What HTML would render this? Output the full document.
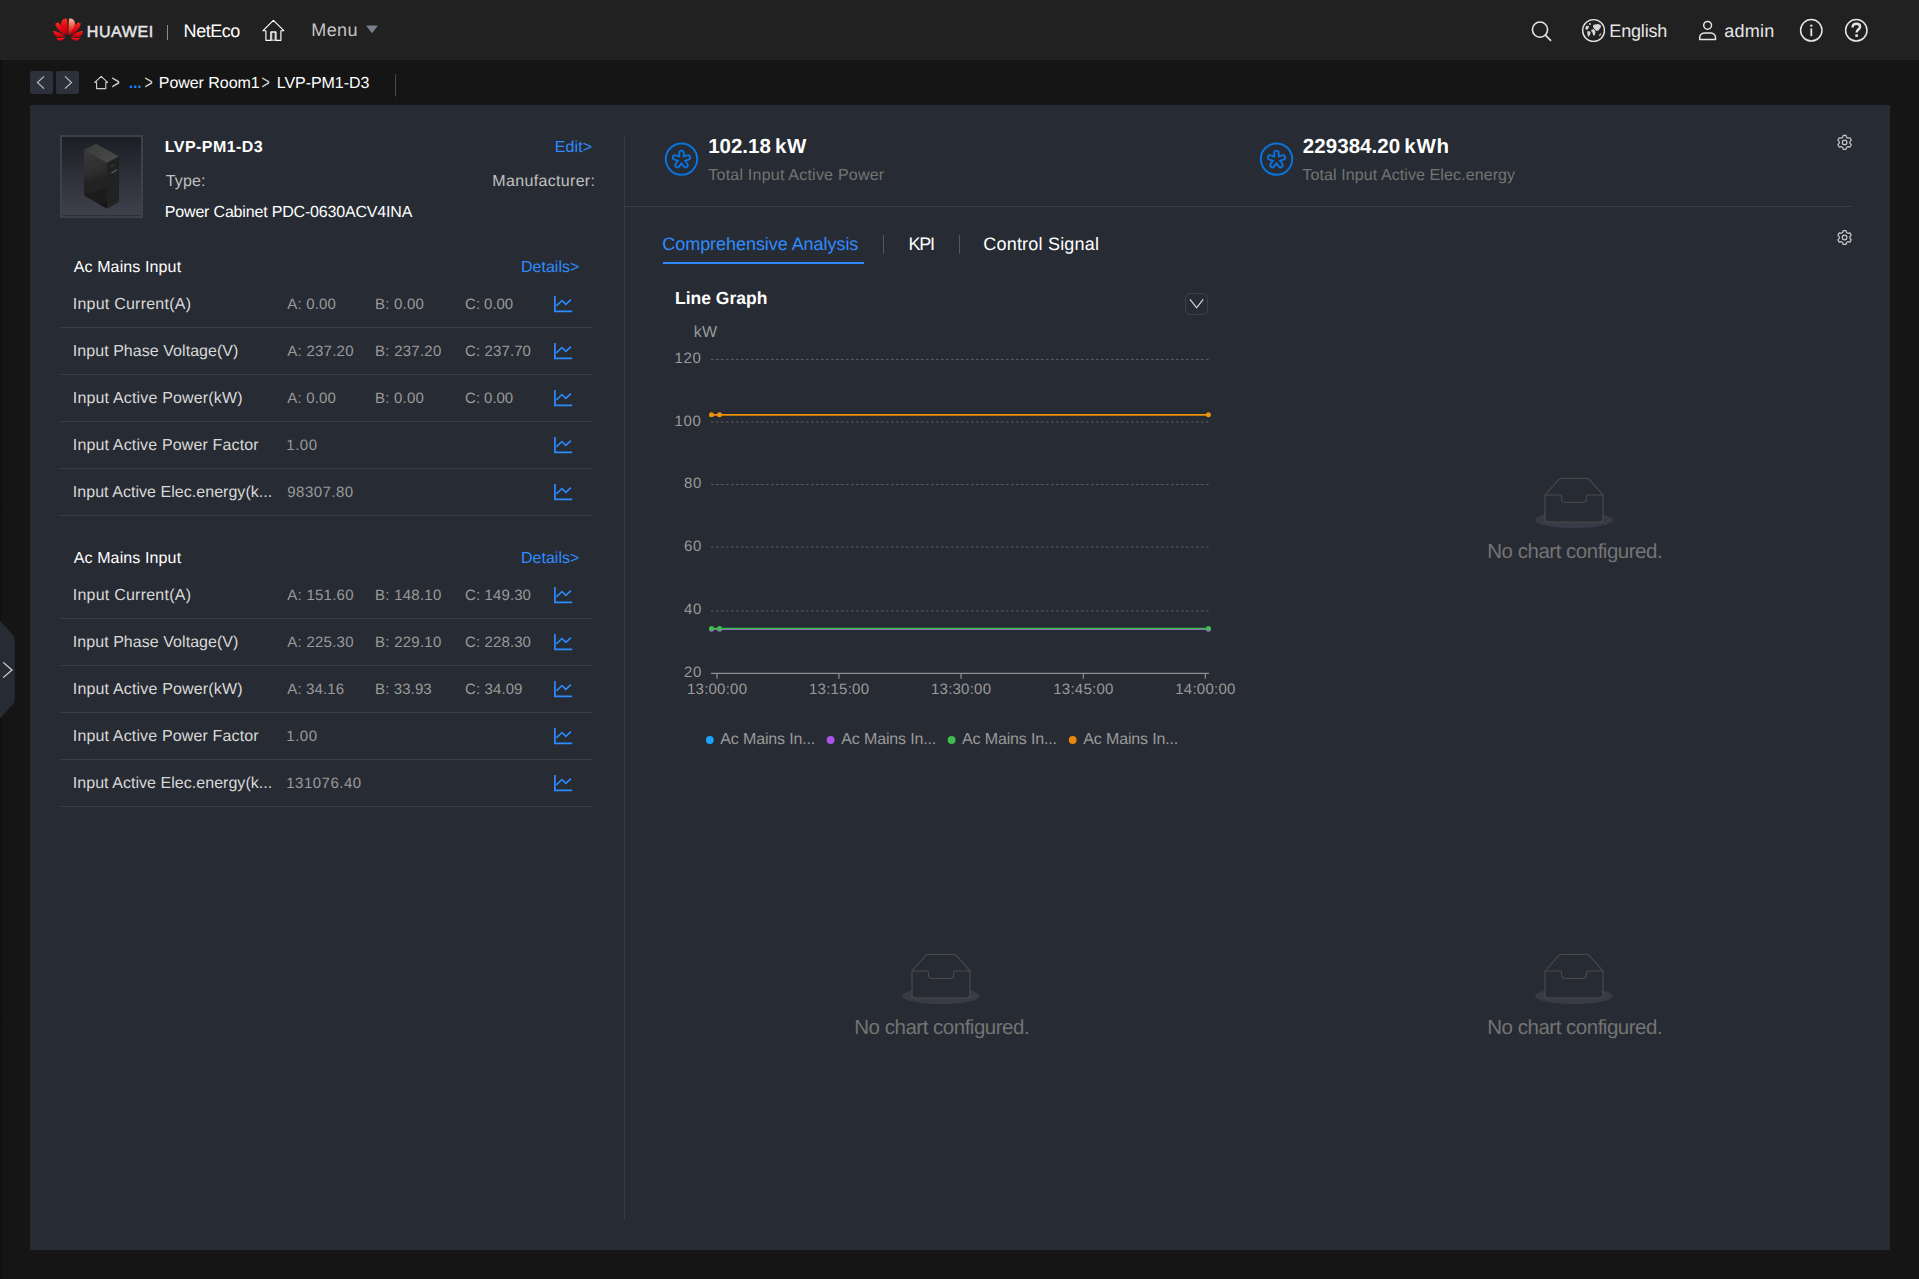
<!DOCTYPE html>
<html lang="en"><head><meta charset="utf-8"><title>NetEco - LVP-PM1-D3</title>
<style>
html,body{margin:0;padding:0}
html{background:#151515}
body{width:1919px;height:1279px;position:relative;overflow:hidden;background:#151515;font-family:"Liberation Sans",sans-serif;-webkit-font-smoothing:antialiased;text-rendering:geometricPrecision}
.abs{position:absolute;display:block}
.t{position:absolute;display:block;line-height:20px;height:20px;white-space:pre}
header{position:absolute;left:0;top:0;width:1919px;height:59px;background:#212121;border-bottom:1px solid #242424}
nav{position:absolute;left:0;top:0;width:0;height:0}
aside{position:absolute;left:0;top:0;width:0;height:0}
body::before{content:'';position:absolute;left:0;top:60px;width:3px;height:1219px;background:linear-gradient(90deg,#0e0e0e,#151515)}
main{position:absolute;left:0;top:0;width:0;height:0}
.panel{position:absolute;left:30px;top:105px;width:1860px;height:1145px;background:#272b33}
.sep{position:absolute;left:60px;width:533px;height:1px;background:#3c3e44}
.vline{position:absolute;left:624px;top:135px;width:1px;height:1085px;background:#383b42}
.hline{position:absolute;left:625px;top:206px;width:1227px;height:1px;background:#3f3f42}
.tabline{position:absolute;left:663px;top:262px;width:201px;height:2px;background:#2e8bff}
.tsep{position:absolute;top:235px;width:1px;height:19px;background:#55575c}
.dd{position:absolute;left:1185px;top:293px;width:21px;height:20px;border:1px solid #3b404b;border-radius:5.5px}
</style></head><body>
<header><svg class="abs" style="left:53px;top:17px" width="31" height="25" viewBox="0 0 31 25">
<defs><linearGradient id="lg1" x1="0" y1="0" x2="0" y2="1"><stop offset="0" stop-color="#f3301f"/><stop offset="0.55" stop-color="#e40012"/><stop offset="1" stop-color="#b4000d"/></linearGradient>
<linearGradient id="lg2" x1="0" y1="0" x2="0" y2="1"><stop offset="0" stop-color="#f8b8a4"/><stop offset="0.5" stop-color="#f0513c"/><stop offset="1" stop-color="#d40010"/></linearGradient>
<filter id="lb" x="-5%" y="-5%" width="110%" height="110%"><feGaussianBlur stdDeviation="0.3"/></filter></defs>
<g filter="url(#lb)">
<g fill="url(#lg1)">
<path d="M14.3,18.3 C11.5,14.5 7.6,9.5 8.1,6.2 C8.6,3.2 10.4,1.8 12,1.5 C12.8,1.4 13.6,1.6 14.1,1.9 C14.6,6.5 14.7,13 14.5,18.3Z"/>
<path d="M2.3,6.6 L5.2,5.3 C8.6,8.6 11.6,13.6 13.2,18.4 C8.4,16.4 3,12 2.3,6.6Z"/>
<path d="M0.1,13.8 C4.4,14.4 9,16.6 12.5,19.4 C9,20.3 5.4,20.3 3.9,20 C1.6,18.6 0.3,16.4 0.1,13.8Z"/>
<path d="M3.1,21.2 C6,21 9.6,20.8 12.2,20.7 C10.6,22.6 8.6,23.8 6.8,23.9 C5.2,23.6 3.8,22.6 3.1,21.2Z"/>
</g>
<g transform="translate(30.1,0) scale(-1,1)" fill="url(#lg1)">
<path d="M14.3,18.3 C11.5,14.5 7.6,9.5 8.1,6.2 C8.6,3.2 10.4,1.8 12,1.5 C12.8,1.4 13.6,1.6 14.1,1.9 C14.6,6.5 14.7,13 14.5,18.3Z" fill="url(#lg2)"/>
<path d="M2.3,6.6 L5.2,5.3 C8.6,8.6 11.6,13.6 13.2,18.4 C8.4,16.4 3,12 2.3,6.6Z"/>
<path d="M0.1,13.8 C4.4,14.4 9,16.6 12.5,19.4 C9,20.3 5.4,20.3 3.9,20 C1.6,18.6 0.3,16.4 0.1,13.8Z"/>
<path d="M3.1,21.2 C6,21 9.6,20.8 12.2,20.7 C10.6,22.6 8.6,23.8 6.8,23.9 C5.2,23.6 3.8,22.6 3.1,21.2Z"/>
</g></g></svg><svg class="abs" style="left:0;top:0" width="1919" height="60" viewBox="0 0 1919 60" fill="none">
<line x1="167.5" y1="25" x2="167.5" y2="40" stroke="#8c8c8c" stroke-width="1"/>
<path d="M271.6,32 H275.2 V40.3 H271.6Z" stroke="#aaaaaa" stroke-width="1.5"/>
<path d="M273.4,20.3 L283.8,30.7 H280.9 V40.3 H276 V32 H270.8 V40.3 H265.9 V30.7 H263 Z" stroke="#ffffff" stroke-width="1.15" stroke-linejoin="round"/>
<path d="M366,25.4 H378 L372,33.3Z" fill="#7b7e8c"/>
<circle cx="1540" cy="29.6" r="7.6" stroke="#e4e4e4" stroke-width="1.6"/><line x1="1545.4" y1="35.2" x2="1550.6" y2="40.4" stroke="#e4e4e4" stroke-width="1.7" stroke-linecap="round"/>
<circle cx="1593.55" cy="30.5" r="10.9" stroke="#e4e4e4" stroke-width="1.4"/>
<g fill="#d6d6d6" stroke="none"><circle cx="1589.9" cy="24" r="0.95"/>
<path d="M1586,26 L1588.5,25.75 L1589,27 L1588,29 L1586.75,30 L1585.25,28.5Z"/>
<path d="M1587.5,31 L1590,31.5 L1590.75,33 L1589.5,35.5 L1588.25,37 L1587.75,35.5 L1587.25,33Z"/>
<path d="M1593.5,24.75 L1598,24 L1600.5,25 L1601,27 L1599.5,29 L1598.5,30.5 L1596.5,31 L1595,29.5 L1593.5,28 L1593,26.5Z"/>
<path d="M1591.25,30 L1593.5,29 L1595,30.5 L1595.5,32.5 L1594.75,35 L1593.75,36 L1593,34.5 L1592.5,32.5 L1591.25,31.25Z"/>
<path d="M1599,35 L1601.25,32.75 L1601,34.5 L1599.5,36.25Z"/></g>
<circle cx="1707.6" cy="25.3" r="3.9" stroke="#e4e4e4" stroke-width="1.5"/>
<path d="M1699.7,39.5 V37.6 C1699.7,34.6 1702.4,32.9 1705,32.9 H1710.2 C1712.8,32.9 1715.5,34.6 1715.5,37.6 V39.5 Z" stroke="#e4e4e4" stroke-width="1.5" stroke-linejoin="round"/>
<circle cx="1811.3" cy="30.3" r="10.7" stroke="#e4e4e4" stroke-width="1.5"/><circle cx="1811.3" cy="25.6" r="1.2" fill="#e4e4e4"/><line x1="1811.3" y1="28.4" x2="1811.3" y2="36.2" stroke="#e4e4e4" stroke-width="1.8"/>
<circle cx="1856.3" cy="30.3" r="10.7" stroke="#e4e4e4" stroke-width="1.5"/>
<path d="M1852.6,27.4 C1852.6,24.9 1854.2,23.8 1856.4,23.8 C1858.6,23.8 1860.1,25 1860.1,26.8 C1860.1,29.2 1856.6,29.4 1856.6,32.6" stroke="#e4e4e4" stroke-width="2.4"/><rect x="1855.3" y="34.3" width="2.6" height="2.6" fill="#e4e4e4"/>
</svg><span class="t" style="left:86.7px;top:23px;font-size:16px;color:#e4e4e4;letter-spacing:0.64px;-webkit-text-stroke:0.5px #e4e4e4;">HUAWEI</span><span class="t" style="left:183.6px;top:21px;font-size:18px;color:#ffffff;letter-spacing:-0.46px;">NetEco</span><span class="t" style="left:311.3px;top:20px;font-size:18px;color:#c4c4c4;letter-spacing:0.40px;">Menu</span><span class="t" style="left:1609.3px;top:21px;font-size:18px;color:#e6e6e6;letter-spacing:-0.17px;">English</span><span class="t" style="left:1724.3px;top:21px;font-size:18px;color:#e6e6e6;letter-spacing:0.25px;">admin</span></header>
<nav><svg class="abs" style="left:0;top:60px" width="420" height="45" viewBox="0 60 420 45" fill="none">
<rect x="30" y="71" width="23" height="23" rx="2" fill="#2d313b"/><rect x="56" y="71" width="23" height="23" rx="2" fill="#2d313b"/>
<path d="M44,76.4 L37.5,82.5 L44,88.6" stroke="#b9bcc4" stroke-width="1.2"/>
<path d="M65,76.4 L71.5,82.5 L65,88.6" stroke="#b9bcc4" stroke-width="1.2"/>
<path d="M101.2,76.3 L107.6,82.4 H105.8 V88.6 H96.6 V82.4 H94.8 Z" stroke="#cfcfcf" stroke-width="1.1" stroke-linejoin="round"/>
<line x1="395.5" y1="74" x2="395.5" y2="96.5" stroke="#4a4a4a" stroke-width="1"/>
</svg><span class="t" style="left:110.8px;top:74px;font-size:16px;color:#cfcfcf;transform:scale(0.9,1.26);transform-origin:50% 50%;">&gt;</span><span class="t" style="left:128.8px;top:74px;font-size:16px;color:#1a7ff0;letter-spacing:-0.25px;font-weight:700;">...</span><span class="t" style="left:143.8px;top:74px;font-size:16px;color:#cfcfcf;transform:scale(0.9,1.26);transform-origin:50% 50%;">&gt;</span><span class="t" style="left:158.8px;top:74px;font-size:16px;color:#ffffff;letter-spacing:-0.05px;">Power Room1</span><span class="t" style="left:261.3px;top:74px;font-size:16px;color:#cfcfcf;transform:scale(0.9,1.26);transform-origin:50% 50%;">&gt;</span><span class="t" style="left:276.8px;top:74px;font-size:16px;color:#ffffff;letter-spacing:-0.06px;">LVP-PM1-D3</span></nav>
<aside><svg class="abs" style="left:0;top:618px" width="18" height="104" viewBox="0 618 18 104"><path d="M0,620.8 L13.2,635.4 Q14.8,637.2 14.8,639.6 V699.6 Q14.8,702 13.2,703.8 L0,718.4Z" fill="#272b33"/><path d="M3.2,662.4 L12,670 L3.2,677.6" fill="none" stroke="#d8d8d8" stroke-width="1.2"/></svg></aside>
<main>
<div class="panel"></div>
<section class="device"><svg class="abs" style="left:60px;top:135px" width="83" height="83" viewBox="0 0 83 83">
<defs><linearGradient id="dg" x1="0" y1="0" x2="0" y2="1"><stop offset="0" stop-color="#1c1e24"/><stop offset="1" stop-color="#3f424e"/></linearGradient>
<linearGradient id="cl" x1="0" y1="0" x2="0.12" y2="1"><stop offset="0" stop-color="#3a3a3a"/><stop offset="0.48" stop-color="#2b2b2b"/><stop offset="0.52" stop-color="#252525"/><stop offset="1" stop-color="#191919"/></linearGradient>
<linearGradient id="ct" x1="0" y1="0" x2="1" y2="0.6"><stop offset="0" stop-color="#3b3b3b"/><stop offset="1" stop-color="#484848"/></linearGradient>
<filter id="bl" x="-10%" y="-10%" width="120%" height="120%"><feGaussianBlur stdDeviation="0.45"/></filter></defs>
<rect x="1" y="1" width="81" height="81" fill="url(#dg)" stroke="#3d414c" stroke-width="2"/>
<line x1="2" y1="80.6" x2="81" y2="80.6" stroke="#2b2e36" stroke-width="0.9"/>
<g filter="url(#bl)">
<polygon points="24,15.1 35.9,8.7 58.9,21.4 47,28.1" fill="url(#ct)"/>
<polygon points="24,15.1 47,28.1 47,73.8 24,60.4" fill="url(#cl)"/>
<polygon points="47,28.1 58.9,21.4 58.9,66.7 47,73.8" fill="#202020"/>
<path d="M51.4,37.4 l5.4,-3.1 v1.1 l-5.4,3.1z" fill="#6e6e6e"/>
<path d="M50.6,30.6 l3.4,-1.9 v2.6 l-3.4,1.9z" fill="#2c3338"/>
</g>
</svg><span class="t" style="left:164.8px;top:138px;font-size:16px;color:#ffffff;letter-spacing:0.44px;font-weight:700;">LVP-PM1-D3</span><span class="t" style="left:554.8px;top:138px;font-size:16px;color:#2e8bff;letter-spacing:0.12px;">Edit&gt;</span><span class="t" style="left:165.8px;top:172px;font-size:16px;color:#c0c0c0;letter-spacing:0.12px;">Type:</span><span class="t" style="left:492.3px;top:172px;font-size:16px;color:#c0c0c0;letter-spacing:0.33px;">Manufacturer:</span><span class="t" style="left:164.8px;top:203px;font-size:16px;color:#ffffff;letter-spacing:-0.18px;">Power Cabinet PDC-0630ACV4INA</span></section>
<section class="grp"><span class="t" style="left:73.7px;top:258px;font-size:16px;color:#ffffff;letter-spacing:0.12px;">Ac Mains Input</span><span class="t" style="left:521.0px;top:258px;font-size:16px;color:#2e8bff;letter-spacing:0.01px;">Details&gt;</span><span class="t" style="left:72.8px;top:295px;font-size:16px;color:#d8d8d8;letter-spacing:0.23px;">Input Current(A)</span><span class="t" style="left:287.3px;top:295px;font-size:15px;color:#9a9a9a;letter-spacing:0.17px;">A: 0.00</span><span class="t" style="left:375.1px;top:295px;font-size:15px;color:#9a9a9a;letter-spacing:0.20px;">B: 0.00</span><span class="t" style="left:465.1px;top:295px;font-size:15px;color:#9a9a9a;letter-spacing:-0.05px;">C: 0.00</span><span class="t" style="left:72.8px;top:342px;font-size:16px;color:#d8d8d8;letter-spacing:0.05px;">Input Phase Voltage(V)</span><span class="t" style="left:287.3px;top:342px;font-size:15px;color:#9a9a9a;letter-spacing:0.25px;">A: 237.20</span><span class="t" style="left:375.1px;top:342px;font-size:15px;color:#9a9a9a;letter-spacing:0.24px;">B: 237.20</span><span class="t" style="left:465.1px;top:342px;font-size:15px;color:#9a9a9a;letter-spacing:0.10px;">C: 237.70</span><span class="t" style="left:72.8px;top:389px;font-size:16px;color:#d8d8d8;letter-spacing:0.17px;">Input Active Power(kW)</span><span class="t" style="left:287.3px;top:389px;font-size:15px;color:#9a9a9a;letter-spacing:0.17px;">A: 0.00</span><span class="t" style="left:375.1px;top:389px;font-size:15px;color:#9a9a9a;letter-spacing:0.20px;">B: 0.00</span><span class="t" style="left:465.1px;top:389px;font-size:15px;color:#9a9a9a;letter-spacing:-0.05px;">C: 0.00</span><span class="t" style="left:72.8px;top:436px;font-size:16px;color:#d8d8d8;letter-spacing:0.15px;">Input Active Power Factor</span><span class="t" style="left:286.3px;top:436px;font-size:15px;color:#9a9a9a;letter-spacing:0.53px;">1.00</span><span class="t" style="left:72.8px;top:483px;font-size:16px;color:#d8d8d8;letter-spacing:0.04px;">Input Active Elec.energy(k...</span><span class="t" style="left:287.3px;top:483px;font-size:15px;color:#9a9a9a;letter-spacing:0.46px;">98307.80</span><i class="sep" style="top:327px"></i><i class="sep" style="top:374px"></i><i class="sep" style="top:421px"></i><i class="sep" style="top:468px"></i><i class="sep" style="top:515px"></i></section>
<section class="grp"><span class="t" style="left:73.7px;top:549px;font-size:16px;color:#ffffff;letter-spacing:0.12px;">Ac Mains Input</span><span class="t" style="left:521.0px;top:549px;font-size:16px;color:#2e8bff;letter-spacing:0.01px;">Details&gt;</span><span class="t" style="left:72.8px;top:586px;font-size:16px;color:#d8d8d8;letter-spacing:0.23px;">Input Current(A)</span><span class="t" style="left:287.3px;top:586px;font-size:15px;color:#9a9a9a;letter-spacing:0.25px;">A: 151.60</span><span class="t" style="left:375.1px;top:586px;font-size:15px;color:#9a9a9a;letter-spacing:0.24px;">B: 148.10</span><span class="t" style="left:465.1px;top:586px;font-size:15px;color:#9a9a9a;letter-spacing:0.10px;">C: 149.30</span><span class="t" style="left:72.8px;top:633px;font-size:16px;color:#d8d8d8;letter-spacing:0.05px;">Input Phase Voltage(V)</span><span class="t" style="left:287.3px;top:633px;font-size:15px;color:#9a9a9a;letter-spacing:0.25px;">A: 225.30</span><span class="t" style="left:375.1px;top:633px;font-size:15px;color:#9a9a9a;letter-spacing:0.24px;">B: 229.10</span><span class="t" style="left:465.1px;top:633px;font-size:15px;color:#9a9a9a;letter-spacing:0.10px;">C: 228.30</span><span class="t" style="left:72.8px;top:680px;font-size:16px;color:#d8d8d8;letter-spacing:0.17px;">Input Active Power(kW)</span><span class="t" style="left:287.3px;top:680px;font-size:15px;color:#9a9a9a;letter-spacing:0.14px;">A: 34.16</span><span class="t" style="left:375.1px;top:680px;font-size:15px;color:#9a9a9a;letter-spacing:0.10px;">B: 33.93</span><span class="t" style="left:465.1px;top:680px;font-size:15px;color:#9a9a9a;letter-spacing:0.09px;">C: 34.09</span><span class="t" style="left:72.8px;top:727px;font-size:16px;color:#d8d8d8;letter-spacing:0.15px;">Input Active Power Factor</span><span class="t" style="left:286.3px;top:727px;font-size:15px;color:#9a9a9a;letter-spacing:0.53px;">1.00</span><span class="t" style="left:72.8px;top:774px;font-size:16px;color:#d8d8d8;letter-spacing:0.04px;">Input Active Elec.energy(k...</span><span class="t" style="left:286.3px;top:774px;font-size:15px;color:#9a9a9a;letter-spacing:0.48px;">131076.40</span><i class="sep" style="top:618px"></i><i class="sep" style="top:665px"></i><i class="sep" style="top:712px"></i><i class="sep" style="top:759px"></i><i class="sep" style="top:806px"></i></section>
<svg class="abs" style="left:0;top:0" width="1919" height="1279" viewBox="0 0 1919 1279" fill="none">
<g transform="translate(554,296)" fill="none" stroke="#2e8bff" stroke-width="1.7"><path d="M0.9,0 V15.3 H18.2"/><path d="M2.4,9.9 L8,4.5 L11.8,8.3 L16.9,3.6" stroke-width="1.6"/></g><g transform="translate(554,343)" fill="none" stroke="#2e8bff" stroke-width="1.7"><path d="M0.9,0 V15.3 H18.2"/><path d="M2.4,9.9 L8,4.5 L11.8,8.3 L16.9,3.6" stroke-width="1.6"/></g><g transform="translate(554,390)" fill="none" stroke="#2e8bff" stroke-width="1.7"><path d="M0.9,0 V15.3 H18.2"/><path d="M2.4,9.9 L8,4.5 L11.8,8.3 L16.9,3.6" stroke-width="1.6"/></g><g transform="translate(554,437)" fill="none" stroke="#2e8bff" stroke-width="1.7"><path d="M0.9,0 V15.3 H18.2"/><path d="M2.4,9.9 L8,4.5 L11.8,8.3 L16.9,3.6" stroke-width="1.6"/></g><g transform="translate(554,484)" fill="none" stroke="#2e8bff" stroke-width="1.7"><path d="M0.9,0 V15.3 H18.2"/><path d="M2.4,9.9 L8,4.5 L11.8,8.3 L16.9,3.6" stroke-width="1.6"/></g><g transform="translate(554,587)" fill="none" stroke="#2e8bff" stroke-width="1.7"><path d="M0.9,0 V15.3 H18.2"/><path d="M2.4,9.9 L8,4.5 L11.8,8.3 L16.9,3.6" stroke-width="1.6"/></g><g transform="translate(554,634)" fill="none" stroke="#2e8bff" stroke-width="1.7"><path d="M0.9,0 V15.3 H18.2"/><path d="M2.4,9.9 L8,4.5 L11.8,8.3 L16.9,3.6" stroke-width="1.6"/></g><g transform="translate(554,681)" fill="none" stroke="#2e8bff" stroke-width="1.7"><path d="M0.9,0 V15.3 H18.2"/><path d="M2.4,9.9 L8,4.5 L11.8,8.3 L16.9,3.6" stroke-width="1.6"/></g><g transform="translate(554,728)" fill="none" stroke="#2e8bff" stroke-width="1.7"><path d="M0.9,0 V15.3 H18.2"/><path d="M2.4,9.9 L8,4.5 L11.8,8.3 L16.9,3.6" stroke-width="1.6"/></g><g transform="translate(554,775)" fill="none" stroke="#2e8bff" stroke-width="1.7"><path d="M0.9,0 V15.3 H18.2"/><path d="M2.4,9.9 L8,4.5 L11.8,8.3 L16.9,3.6" stroke-width="1.6"/></g>
<circle cx="681.5" cy="159.1" r="15.7" fill="none" stroke="#0a74de" stroke-width="2"/><g stroke="#0a74de" stroke-width="6.3" stroke-linecap="round"><line x1="681.5" y1="159.6" x2="681.50" y2="152.80"/><line x1="681.5" y1="159.6" x2="687.97" y2="157.50"/><line x1="681.5" y1="159.6" x2="685.50" y2="165.10"/><line x1="681.5" y1="159.6" x2="677.50" y2="165.10"/><line x1="681.5" y1="159.6" x2="675.03" y2="157.50"/></g><g stroke="#272b33" stroke-width="2.6" stroke-linecap="round"><line x1="681.5" y1="159.6" x2="681.50" y2="152.80"/><line x1="681.5" y1="159.6" x2="687.97" y2="157.50"/><line x1="681.5" y1="159.6" x2="685.50" y2="165.10"/><line x1="681.5" y1="159.6" x2="677.50" y2="165.10"/><line x1="681.5" y1="159.6" x2="675.03" y2="157.50"/></g><circle cx="1276.5" cy="159.1" r="15.7" fill="none" stroke="#0a74de" stroke-width="2"/><g stroke="#0a74de" stroke-width="6.3" stroke-linecap="round"><line x1="1276.5" y1="159.6" x2="1276.50" y2="152.80"/><line x1="1276.5" y1="159.6" x2="1282.97" y2="157.50"/><line x1="1276.5" y1="159.6" x2="1280.50" y2="165.10"/><line x1="1276.5" y1="159.6" x2="1272.50" y2="165.10"/><line x1="1276.5" y1="159.6" x2="1270.03" y2="157.50"/></g><g stroke="#272b33" stroke-width="2.6" stroke-linecap="round"><line x1="1276.5" y1="159.6" x2="1276.50" y2="152.80"/><line x1="1276.5" y1="159.6" x2="1282.97" y2="157.50"/><line x1="1276.5" y1="159.6" x2="1280.50" y2="165.10"/><line x1="1276.5" y1="159.6" x2="1272.50" y2="165.10"/><line x1="1276.5" y1="159.6" x2="1270.03" y2="157.50"/></g>
<path d="M1842.66,137.36 L1843.25,135.43 L1845.95,135.43 L1846.54,137.36 L1848.00,138.20 L1849.96,137.74 L1851.31,140.09 L1849.93,141.56 L1849.93,143.24 L1851.31,144.71 L1849.96,147.06 L1848.00,146.60 L1846.54,147.44 L1845.95,149.37 L1843.25,149.37 L1842.66,147.44 L1841.20,146.60 L1839.24,147.06 L1837.89,144.71 L1839.27,143.24 L1839.27,141.56 L1837.89,140.09 L1839.24,137.74 L1841.20,138.20Z" fill="none" stroke="#c9c9c9" stroke-width="1.2" stroke-linejoin="round"/><circle cx="1844.6" cy="142.4" r="2.3" fill="none" stroke="#c9c9c9" stroke-width="1.2"/><path d="M1842.66,232.46 L1843.25,230.53 L1845.95,230.53 L1846.54,232.46 L1848.00,233.30 L1849.96,232.84 L1851.31,235.19 L1849.93,236.66 L1849.93,238.34 L1851.31,239.81 L1849.96,242.16 L1848.00,241.70 L1846.54,242.54 L1845.95,244.47 L1843.25,244.47 L1842.66,242.54 L1841.20,241.70 L1839.24,242.16 L1837.89,239.81 L1839.27,238.34 L1839.27,236.66 L1837.89,235.19 L1839.24,232.84 L1841.20,233.30Z" fill="none" stroke="#c9c9c9" stroke-width="1.2" stroke-linejoin="round"/><circle cx="1844.6" cy="237.5" r="2.3" fill="none" stroke="#c9c9c9" stroke-width="1.2"/>
<path d="M1190,299.4 L1196.6,307.8 L1203.2,299.4" stroke="#d4d4d4" stroke-width="1.3"/>
<line x1="711" y1="359.5" x2="1209" y2="359.5" stroke="#5b5d62" stroke-width="1" stroke-dasharray="2.6 2.4"/><line x1="711" y1="422.0" x2="1209" y2="422.0" stroke="#5b5d62" stroke-width="1" stroke-dasharray="2.6 2.4"/><line x1="711" y1="484.5" x2="1209" y2="484.5" stroke="#5b5d62" stroke-width="1" stroke-dasharray="2.6 2.4"/><line x1="711" y1="547.0" x2="1209" y2="547.0" stroke="#5b5d62" stroke-width="1" stroke-dasharray="2.6 2.4"/><line x1="711" y1="610.9" x2="1209" y2="610.9" stroke="#5b5d62" stroke-width="1" stroke-dasharray="2.6 2.4"/><line x1="711" y1="673.4" x2="1209" y2="673.4" stroke="#8f8f8f" stroke-width="1.3"/><line x1="717" y1="673.3" x2="717" y2="678.7" stroke="#8f8f8f" stroke-width="1.2"/><line x1="839" y1="673.3" x2="839" y2="678.7" stroke="#8f8f8f" stroke-width="1.2"/><line x1="961" y1="673.3" x2="961" y2="678.7" stroke="#8f8f8f" stroke-width="1.2"/><line x1="1083.3" y1="673.3" x2="1083.3" y2="678.7" stroke="#8f8f8f" stroke-width="1.2"/><line x1="1205.3" y1="673.3" x2="1205.3" y2="678.7" stroke="#8f8f8f" stroke-width="1.2"/><polyline points="711.5,629.3 719.5,629.3 1208.4,629.3" fill="none" stroke="#a855e8" stroke-width="1.5"/><circle cx="711.5" cy="629.3" r="2.5" fill="#a855e8"/><circle cx="719.5" cy="629.3" r="2.5" fill="#a855e8"/><circle cx="1208.4" cy="629.3" r="2.5" fill="#a855e8"/><polyline points="711.5,628.4 719.5,628.4 1208.4,628.4" fill="none" stroke="#3dbd4a" stroke-width="1.5"/><circle cx="711.5" cy="628.4" r="2.5" fill="#3dbd4a"/><circle cx="719.5" cy="628.4" r="2.5" fill="#3dbd4a"/><circle cx="1208.4" cy="628.4" r="2.5" fill="#3dbd4a"/><polyline points="711.5,414.8 719.5,414.8 1208.4,414.8" fill="none" stroke="#ee9208" stroke-width="1.7"/><circle cx="711.5" cy="414.8" r="2.5" fill="#ee9208"/><circle cx="719.5" cy="414.8" r="2.5" fill="#ee9208"/><circle cx="1208.4" cy="414.8" r="2.5" fill="#ee9208"/><circle cx="709.8" cy="740" r="3.9" fill="#1aa3ff"/><circle cx="830.6" cy="740" r="3.9" fill="#a855e8"/><circle cx="951.6" cy="740" r="3.9" fill="#3dbd4a"/><circle cx="1072.7" cy="740" r="3.9" fill="#e8890c"/>
<ellipse cx="1574" cy="520" rx="39" ry="8" fill="#383b45"/><path d="M1545,495 L1559,479.2 Q1560,478.5 1561.5,478.5 H1586.5 Q1588,478.5 1589,479.2 L1603,495 V519 Q1603,522 1600,522 H1548 Q1545,522 1545,519 Z" fill="#272b33" stroke="#4b4b49" stroke-width="1.1"/><path d="M1545,495 H1559.5 Q1561.5,495 1561.5,497 V499 Q1561.5,502.5 1565,502.5 H1583 Q1586.5,502.5 1586.5,499 V497 Q1586.5,495 1588.5,495 H1603" fill="none" stroke="#4b4b49" stroke-width="1.1"/><ellipse cx="941" cy="996" rx="39" ry="8" fill="#383b45"/><path d="M912,971 L926,955.2 Q927,954.5 928.5,954.5 H953.5 Q955,954.5 956,955.2 L970,971 V995 Q970,998 967,998 H915 Q912,998 912,995 Z" fill="#272b33" stroke="#4b4b49" stroke-width="1.1"/><path d="M912,971 H926.5 Q928.5,971 928.5,973 V975 Q928.5,978.5 932,978.5 H950 Q953.5,978.5 953.5,975 V973 Q953.5,971 955.5,971 H970" fill="none" stroke="#4b4b49" stroke-width="1.1"/><ellipse cx="1574" cy="996" rx="39" ry="8" fill="#383b45"/><path d="M1545,971 L1559,955.2 Q1560,954.5 1561.5,954.5 H1586.5 Q1588,954.5 1589,955.2 L1603,971 V995 Q1603,998 1600,998 H1548 Q1545,998 1545,995 Z" fill="#272b33" stroke="#4b4b49" stroke-width="1.1"/><path d="M1545,971 H1559.5 Q1561.5,971 1561.5,973 V975 Q1561.5,978.5 1565,978.5 H1583 Q1586.5,978.5 1586.5,975 V973 Q1586.5,971 1588.5,971 H1603" fill="none" stroke="#4b4b49" stroke-width="1.1"/>
</svg>
<i class="vline"></i><i class="hline"></i>
<section class="kpi"><span class="t" style="left:708.2px;top:137px;font-size:20.5px;color:#ffffff;letter-spacing:-0.02px;font-weight:700;">102.18</span><span class="t" style="left:774.9px;top:137px;font-size:20.5px;color:#ffffff;letter-spacing:0.70px;font-weight:700;">kW</span><span class="t" style="left:708.3px;top:166px;font-size:16px;color:#747474;letter-spacing:0.22px;">Total Input Active Power</span><span class="t" style="left:1302.8px;top:137px;font-size:20.5px;color:#ffffff;letter-spacing:0.06px;font-weight:700;">229384.20</span><span class="t" style="left:1404.3px;top:137px;font-size:20.5px;color:#ffffff;letter-spacing:0.75px;font-weight:700;">kWh</span><span class="t" style="left:1302.3px;top:166px;font-size:16px;color:#747474;letter-spacing:0.10px;">Total Input Active Elec.energy</span></section>
<section class="tabs"><span class="t" style="left:662.3px;top:234px;font-size:18px;color:#2e8bff;letter-spacing:-0.05px;">Comprehensive Analysis</span><span class="t" style="left:908.6px;top:234px;font-size:18px;color:#ffffff;letter-spacing:-1.35px;">KPI</span><span class="t" style="left:983.3px;top:234px;font-size:18px;color:#ffffff;letter-spacing:0.20px;">Control Signal</span><i class="tabline"></i><i class="tsep" style="left:883px"></i><i class="tsep" style="left:959px"></i></section>
<section class="chart"><span class="t" style="left:675.0px;top:288px;font-size:17.5px;color:#ffffff;font-weight:700;">Line Graph</span><i class="dd"></i><span class="t" style="left:693.8px;top:323px;font-size:16px;color:#9a9a9a;letter-spacing:0.30px;">kW</span><span class="t" style="left:674.5px;top:349px;font-size:15px;color:#9a9a9a;letter-spacing:0.60px;">120</span><span class="t" style="left:674.5px;top:412px;font-size:15px;color:#9a9a9a;letter-spacing:0.60px;">100</span><span class="t" style="left:684.0px;top:474px;font-size:15px;color:#9a9a9a;letter-spacing:0.70px;">80</span><span class="t" style="left:684.0px;top:537px;font-size:15px;color:#9a9a9a;letter-spacing:0.70px;">60</span><span class="t" style="left:684.0px;top:600px;font-size:15px;color:#9a9a9a;letter-spacing:0.70px;">40</span><span class="t" style="left:684.0px;top:663px;font-size:15px;color:#9a9a9a;letter-spacing:0.70px;">20</span><span class="t" style="left:687.0px;top:680px;font-size:15px;color:#9a9a9a;letter-spacing:0.23px;">13:00:00</span><span class="t" style="left:809.0px;top:680px;font-size:15px;color:#9a9a9a;letter-spacing:0.23px;">13:15:00</span><span class="t" style="left:931.0px;top:680px;font-size:15px;color:#9a9a9a;letter-spacing:0.23px;">13:30:00</span><span class="t" style="left:1053.3px;top:680px;font-size:15px;color:#9a9a9a;letter-spacing:0.23px;">13:45:00</span><span class="t" style="left:1175.3px;top:680px;font-size:15px;color:#9a9a9a;letter-spacing:0.23px;">14:00:00</span><span class="t" style="left:720.3px;top:730px;font-size:16px;color:#9a9a9a;letter-spacing:-0.15px;">Ac Mains In...</span><span class="t" style="left:841.3px;top:730px;font-size:16px;color:#9a9a9a;letter-spacing:-0.15px;">Ac Mains In...</span><span class="t" style="left:962.1px;top:730px;font-size:16px;color:#9a9a9a;letter-spacing:-0.15px;">Ac Mains In...</span><span class="t" style="left:1083.3px;top:730px;font-size:16px;color:#9a9a9a;letter-spacing:-0.15px;">Ac Mains In...</span></section>
<section class="empty"><span class="t" style="left:1487.3px;top:542px;font-size:20.5px;color:#747474;letter-spacing:-0.49px;">No chart configured.</span><span class="t" style="left:854.3px;top:1018px;font-size:20.5px;color:#747474;letter-spacing:-0.49px;">No chart configured.</span><span class="t" style="left:1487.3px;top:1018px;font-size:20.5px;color:#747474;letter-spacing:-0.49px;">No chart configured.</span></section>
</main>
</body></html>
